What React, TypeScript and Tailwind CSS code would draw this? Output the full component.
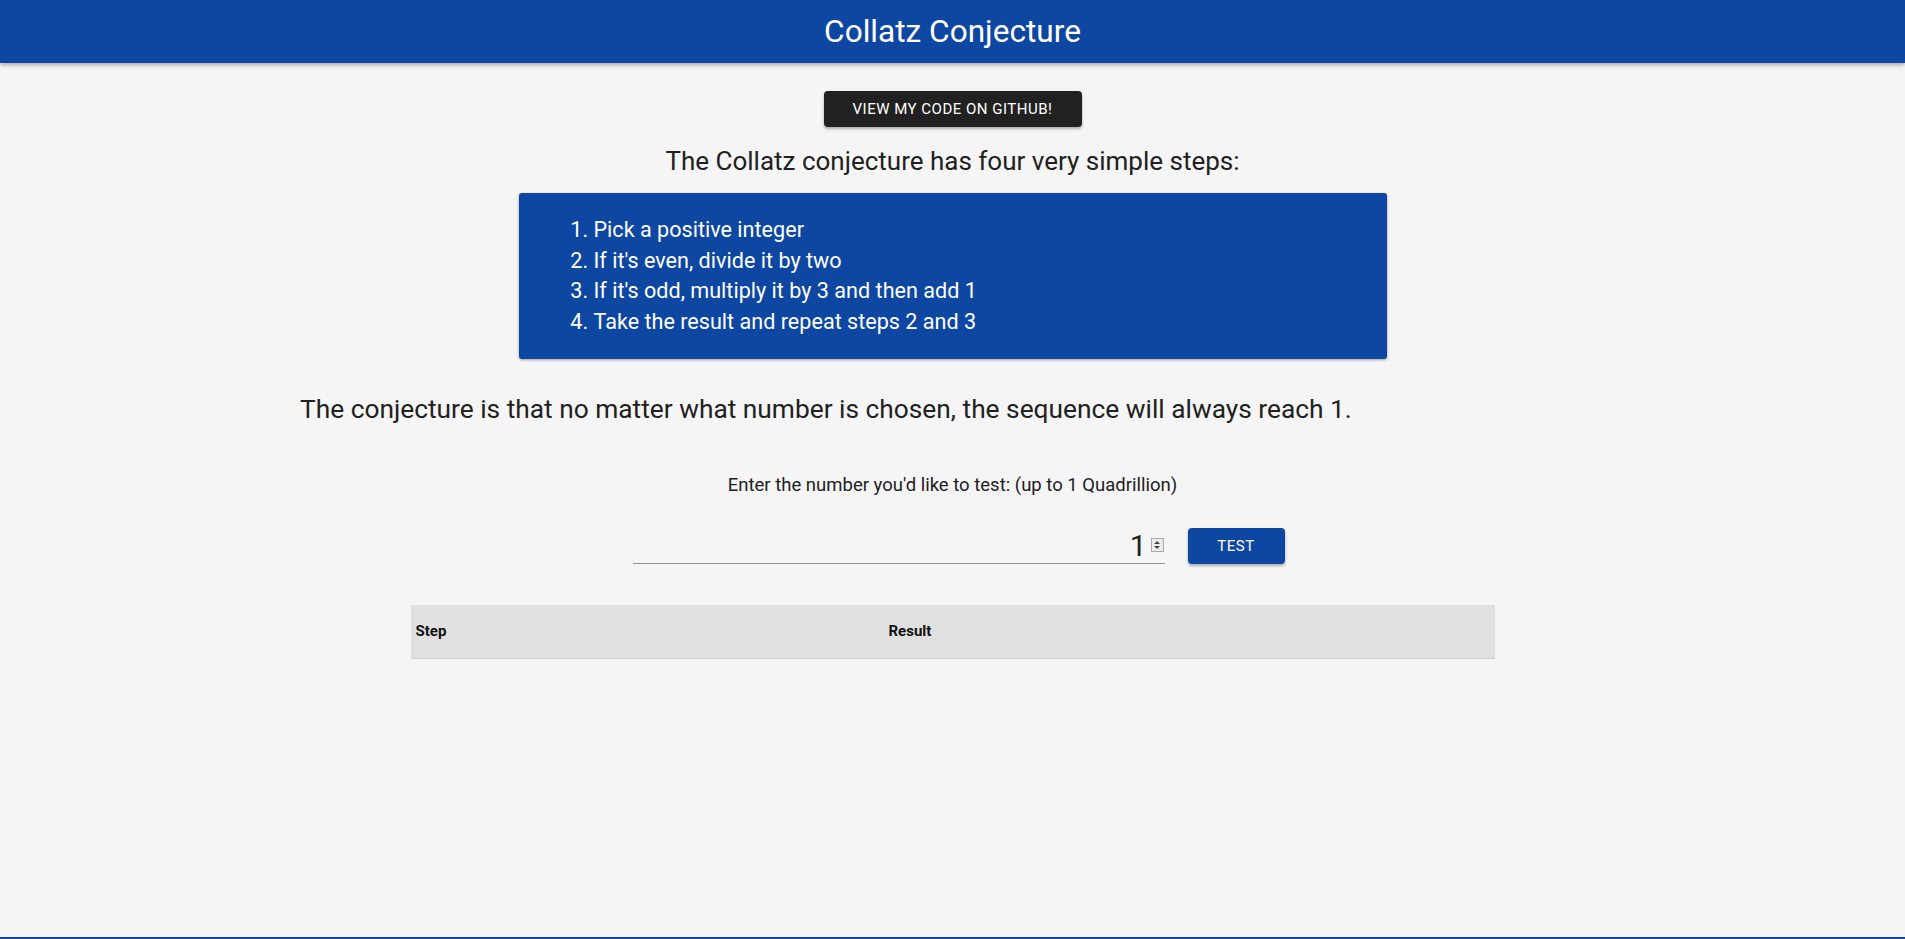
import React, { useState } from 'react';

const steps = [
  'Pick a positive integer',
  "If it's even, divide it by two",
  "If it's odd, multiply it by 3 and then add 1",
  'Take the result and repeat steps 2 and 3',
];

export default function App() {
  const [value, setValue] = useState('1');

  return (
    <div className="min-h-screen flex flex-col bg-[#f5f5f5] text-[#212121] font-['Roboto','Liberation_Sans',sans-serif]">
      <header className="h-[63px] shrink-0 bg-[#0d47a1] shadow-[0_2px_4px_rgba(0,0,0,0.3)] flex items-center justify-center">
        <h1 className="text-[31.6px] leading-none text-white">Collatz Conjecture</h1>
      </header>

      <main className="flex flex-col items-center">
        <button className="mt-[28px] h-[36px] w-[258px] rounded bg-[#212121] text-white text-[15px] font-normal uppercase tracking-[0.5px] shadow-[0_2px_3px_rgba(0,0,0,0.3)]">
          View my code on GitHub!
        </button>

        <h2 className="mt-[18px] text-[26px] leading-[32px]">The Collatz conjecture has four very simple steps:</h2>

        <div className="mt-[16px] w-[868px] rounded-[3px] bg-[#0d47a1] py-[22px] pl-[35px] shadow-[0_1px_3px_rgba(0,0,0,0.35)]">
          <ol className="list-decimal pl-[40px] text-[21.6px] leading-[30.5px] text-white">
            {steps.map((s) => (
              <li key={s}>{s}</li>
            ))}
          </ol>
        </div>

        <div className="mt-[34px] w-[1305px]">
          <p className="text-[26.3px] leading-[32px]">
            The conjecture is that no matter what number is chosen, the sequence will always reach 1.
          </p>
        </div>

        <p className="mt-[48px] text-[18.5px] leading-[24px]">Enter the number you'd like to test: (up to 1 Quadrillion)</p>

        <div className="mt-[30px] flex items-end gap-[23px] ml-[12px]">
          <div className="w-[532px] h-[37px] border-b border-[#949494] flex items-center justify-end">
            <input
              type="text"
              inputMode="numeric"
              value={value}
              onChange={(e) => setValue(e.target.value)}
              className="w-full bg-transparent text-right text-[30px] leading-none outline-none"
            />
            <span className="ml-[4px] mr-[1px] w-[13px] h-[14px] border border-[#a9a9a9] bg-[#ececec] flex flex-col items-center justify-center gap-[2px] shrink-0">
              <span className="w-0 h-0 border-x-[3px] border-x-transparent border-b-[3px] border-b-[#444]" />
              <span className="w-0 h-0 border-x-[3px] border-x-transparent border-t-[3px] border-t-[#444]" />
            </span>
          </div>
          <button className="h-[36px] w-[97px] rounded bg-[#0d47a1] text-white text-[15px] font-normal uppercase tracking-[0.5px] shadow-[0_2px_3px_rgba(0,0,0,0.3)]">
            Test
          </button>
        </div>

        <table className="mt-[41px] w-[1084px] border-collapse">
          <thead>
            <tr className="h-[53px] bg-[#e0e0e0] border-b border-[#cfcfcf]">
              <th className="w-[478px] pl-[5px] text-left text-[15px] font-bold text-[#111]">Step</th>
              <th className="text-left text-[15px] font-bold text-[#111]">Result</th>
            </tr>
          </thead>
          <tbody />
        </table>
      </main>

      <footer className="mt-auto h-[2px] bg-[#0d47a1]" />
    </div>
  );
}
